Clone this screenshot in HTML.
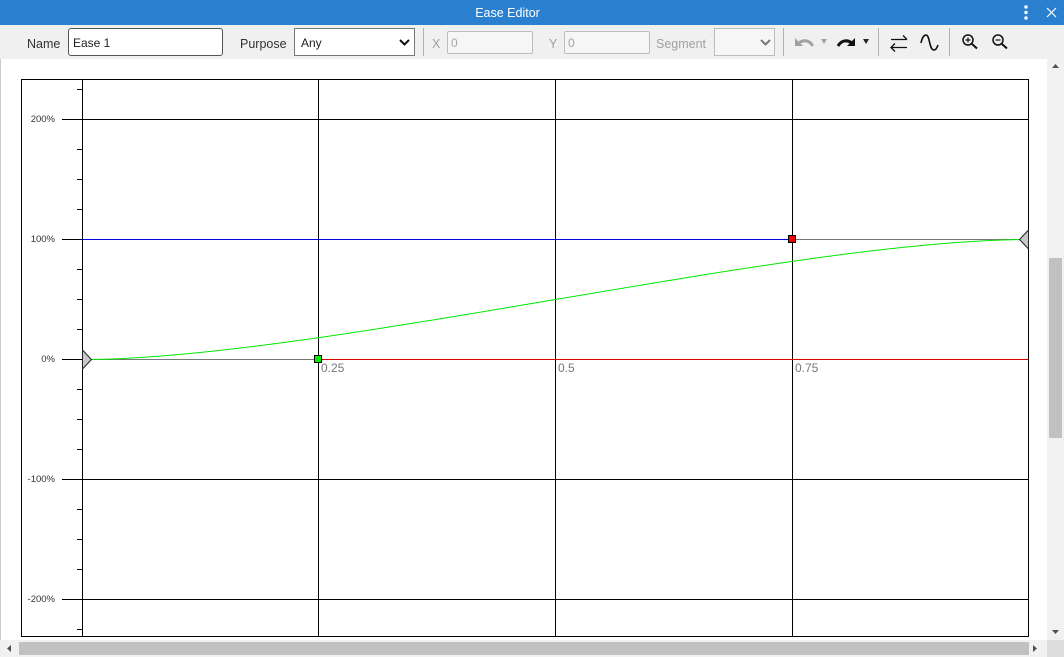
<!DOCTYPE html>
<html><head><meta charset="utf-8"><title>Ease Editor</title>
<style>
html,body{margin:0;padding:0;width:1064px;height:657px;overflow:hidden;background:#fff;font-family:"Liberation Sans",sans-serif}
.a{position:absolute;box-sizing:border-box;white-space:nowrap}
.l{font-size:12.5px;line-height:16px;color:#333}
.d{color:#a0a0a0}
.box{background:#fff;border:1px solid #767676;font-size:12px;line-height:28px;color:#222}
.dis{background:#f6f6f6;border:1px solid #bdbdbd;border-radius:2px;font-size:12px;line-height:23px;color:#a5a5a5;padding-left:3px}
.sep{width:1px;background:#b0b0b0;top:28px;height:28px}
svg{position:absolute;overflow:visible}
.yl{font-size:9.5px;line-height:12px;color:#333;text-align:right;width:50px;left:5px}
.xl{font-size:12px;line-height:14px;color:#777;top:361px}
</style></head><body>
<div class="a" style="left:0;top:0;width:1064px;height:25px;background:#2a7fcf"></div>
<div class="a" style="left:0;top:6px;width:1015px;text-align:center;color:#fff;font-size:12.5px;line-height:15px">Ease Editor</div>
<svg style="left:0;top:0" width="1064" height="25"><circle cx="1026" cy="7" r="1.7" fill="#fff"/><circle cx="1026" cy="12.5" r="1.7" fill="#fff"/><circle cx="1026" cy="18" r="1.7" fill="#fff"/><path d="M1047 8l9 9M1056 8l-9 9" stroke="#fff" stroke-width="1.2" fill="none"/></svg>
<div class="a" style="left:0;top:25px;width:1064px;height:34px;background:#f0f0f0"></div>
<div class="a l" style="left:27px;top:36px">Name</div>
<div class="a box" style="left:68px;top:28px;width:155px;height:28px;border-radius:3px;border-color:#555;padding-left:4px">Ease 1</div>
<div class="a l" style="left:240px;top:36px">Purpose</div>
<div class="a box" style="left:294px;top:28px;width:121px;height:28px;padding-left:6px">Any</div>
<svg style="left:0;top:0" width="1064" height="60"><path d="M400 40l4.500 4.500 4.500-4.500" fill="none" stroke="#111" stroke-width="2"/></svg>
<div class="a sep" style="left:423px"></div>
<div class="a l d" style="left:432px;top:36px">X</div>
<div class="a dis" style="left:447px;top:31px;width:86px;height:23px">0</div>
<div class="a l d" style="left:549px;top:36px">Y</div>
<div class="a dis" style="left:564px;top:31px;width:86px;height:23px">0</div>
<div class="a l d" style="left:656px;top:36px">Segment</div>
<div class="a" style="left:714px;top:28px;width:61px;height:28px;border:1px solid #bdbdbd;background:#f6f6f6"></div>
<div class="a sep" style="left:783px"></div>
<div class="a sep" style="left:878px"></div>
<div class="a sep" style="left:949px"></div>
<svg style="left:0;top:0" width="1064" height="60">
<path d="M761 40l4.500 4.500 4.500-4.500" fill="none" stroke="#777" stroke-width="2"/>
<path d="M812.500 46c-2-5-8-7-13-3.500" fill="none" stroke="#a0a0a0" stroke-width="3"/><path d="M795 38v8h8z" fill="#a0a0a0"/>
<path d="M821 39h6l-3 5z" fill="#a0a0a0"/>
<path d="M838 46c3-5.500 9-6.500 13-3.500" fill="none" stroke="#111" stroke-width="3"/><path d="M855 38v8h-8z" fill="#111"/>
<path d="M863 39h6l-3 5z" fill="#222"/>
<path d="M891 39.500h16M903 35.500l4 4M891 47.500h16M895 43.500l-4 4 4 4" fill="none" stroke="#111" stroke-width="1.300"/>
<path d="M921 43c1-5 3-8 5-8 4 0 3 15 8 15 2 0 3-2 4-5" fill="none" stroke="#111" stroke-width="1.600"/>
<circle cx="968" cy="40" r="5" fill="none" stroke="#111" stroke-width="1.500"/><path d="M972 44l5 4.500" stroke="#111" stroke-width="2"/><path d="M965.500 40h5M968 37.500v5" stroke="#111" stroke-width="1.200"/>
<circle cx="998" cy="40" r="5" fill="none" stroke="#111" stroke-width="1.500"/><path d="M1002 44l5 4.500" stroke="#111" stroke-width="2"/><path d="M995.500 40h5" stroke="#111" stroke-width="1.200"/>
</svg>
<div class="a" style="left:0;top:59px;width:1px;height:581px;background:#ccc"></div>
<div class="a" style="left:1047px;top:59px;width:17px;height:581px;background:#f1f1f1"></div>
<div class="a" style="left:1049px;top:258px;width:13px;height:180px;background:#c1c1c1"></div>
<div class="a" style="left:0;top:640px;width:1047px;height:17px;background:#f1f1f1"></div>
<div class="a" style="left:19px;top:642px;width:1010px;height:13px;background:#c1c1c1"></div>
<div class="a" style="left:1047px;top:640px;width:17px;height:17px;background:#dcdcdc"></div>
<svg style="left:0;top:0" width="1064" height="657"><path d="M1055.500 64l-3.500 4h7zM1055.500 634l-3.500-4h7zM7 648.500l4-3.500v7z" fill="#505050"/><path d="M1037 648.500l-4-3.500v7z" fill="#505050"/></svg>
<svg style="left:0;top:0" width="1064" height="657" shape-rendering="crispEdges">
<rect x="21.500" y="79.500" width="1007" height="557" fill="#fff" stroke="#000"/>
<g stroke="#000" fill="none">
<path d="M82.500 80v556M318.500 80v556M555.500 80v556M792.500 80v556"/>
<path d="M62 119.500h966M62 239.500h966M62 479.500h966M62 599.500h966M62 359.500h20"/>
<path d="M77 89.500h5M77 149.500h5M77 179.500h5M77 209.500h5M77 269.500h5M77 299.500h5M77 329.500h5M77 389.500h5M77 419.500h5M77 449.500h5M77 509.500h5M77 539.500h5M77 569.500h5M77 629.500h5"/>
</g>
<path d="M82 359.500h236" stroke="#777" fill="none"/>
<path d="M318 359.500h710" stroke="#e00000" fill="none"/>
<path d="M82 239.500h710" stroke="#0000e0" fill="none"/>
<path d="M792 239.500h236" stroke="#777" fill="none"/>
</svg>
<svg style="left:0;top:0" width="1064" height="657">
<path d="M82.500 359.500C318.500 359.500 792.500 239.500 1028.500 239.500" fill="none" stroke="#00e800" stroke-width="1"/>
<path d="M82.500 350l9 9.500-9 9.500z" fill="#c8c8c8" stroke="#222" stroke-width="1"/>
<path d="M1028.500 230l-9 9.500 9 9.500z" fill="#c8c8c8" stroke="#222" stroke-width="1"/>
<rect x="314.500" y="355.500" width="7" height="7" fill="#00f000" stroke="#000"/>
<rect x="788.500" y="235.500" width="7" height="7" fill="#f00000" stroke="#000"/>
</svg>
<div class="a yl" style="top:114px">200%</div>
<div class="a yl" style="top:234px">100%</div>
<div class="a yl" style="top:354px">0%</div>
<div class="a yl" style="top:474px">-100%</div>
<div class="a yl" style="top:594px">-200%</div>
<div class="a xl" style="left:321px">0.25</div>
<div class="a xl" style="left:558px">0.5</div>
<div class="a xl" style="left:795px">0.75</div>
</body></html>
